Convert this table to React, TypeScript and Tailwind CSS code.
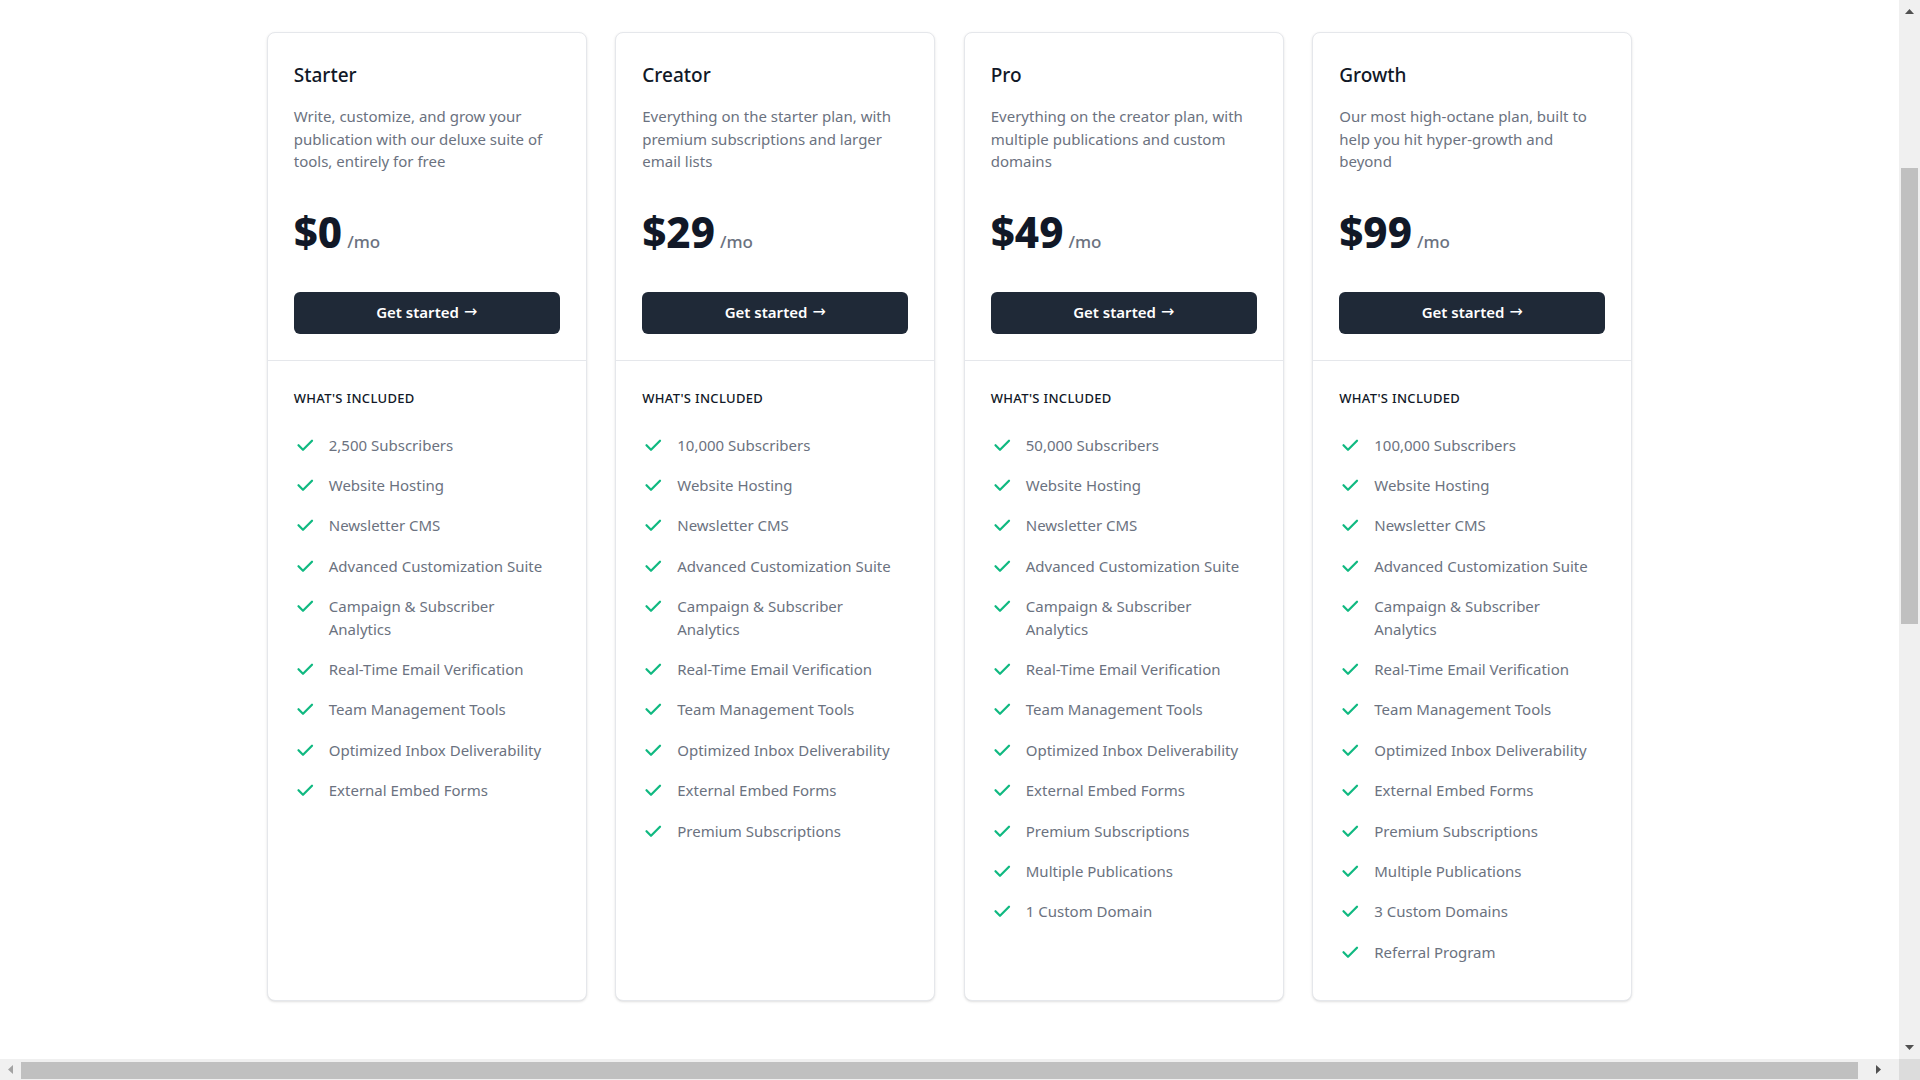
import React from "react";

type Plan = {
  name: string;
  desc: string;
  price: string;
  features: string[];
};

const base = [
  "Website Hosting",
  "Newsletter CMS",
  "Advanced Customization Suite",
  "Campaign & Subscriber Analytics",
  "Real-Time Email Verification",
  "Team Management Tools",
  "Optimized Inbox Deliverability",
  "External Embed Forms",
];

const plans: Plan[] = [
  {
    name: "Starter",
    desc: "Write, customize, and grow your publication with our deluxe suite of tools, entirely for free",
    price: "$0",
    features: ["2,500 Subscribers", ...base],
  },
  {
    name: "Creator",
    desc: "Everything on the starter plan, with premium subscriptions and larger email lists",
    price: "$29",
    features: ["10,000 Subscribers", ...base, "Premium Subscriptions"],
  },
  {
    name: "Pro",
    desc: "Everything on the creator plan, with multiple publications and custom domains",
    price: "$49",
    features: [
      "50,000 Subscribers",
      ...base,
      "Premium Subscriptions",
      "Multiple Publications",
      "1 Custom Domain",
    ],
  },
  {
    name: "Growth",
    desc: "Our most high-octane plan, built to help you hit hyper-growth and beyond",
    price: "$99",
    features: [
      "100,000 Subscribers",
      ...base,
      "Premium Subscriptions",
      "Multiple Publications",
      "3 Custom Domains",
      "Referral Program",
    ],
  },
];

function Check() {
  return (
    <svg
      viewBox="0 0 20 20"
      fill="currentColor"
      className="w-[22.5px] h-[22.5px] shrink-0 text-[#10b981]"
      aria-hidden="true"
    >
      <path
        fillRule="evenodd"
        d="M16.707 5.293a1 1 0 010 1.414l-8 8a1 1 0 01-1.414 0l-4-4a1 1 0 011.414-1.414L8 12.586l7.293-7.293a1 1 0 011.414 0z"
        clipRule="evenodd"
      />
    </svg>
  );
}

function Card({ plan }: { plan: Plan }) {
  return (
    <div className="w-[320px] shrink-0 rounded-lg border border-[#e5e7eb] bg-white shadow-sm flex flex-col">
      <div className="px-[26px] pt-[28px] pb-[26px] border-b border-[#e5e7eb]">
        <h2 className="text-[19px] leading-[28px] font-medium text-[#111827]">{plan.name}</h2>
        <p className="mt-[16px] text-[15px] leading-[22.5px] text-[#6b7280]">{plan.desc}</p>
        <p className="mt-[39px] flex items-baseline">
          <span className="text-[42px] leading-[40px] font-extrabold text-[#111827]">
            {plan.price}
          </span>
          <span className="ml-[5px] text-[17px] font-medium text-[#6b7280]">/mo</span>
        </p>
        <button className="mt-[38px] w-full h-[42px] pb-[2px] rounded-md bg-[#1f2937] text-white text-[15px] font-semibold flex items-center justify-center">
          Get started
          <span
            className="ml-[5px] font-normal text-[16px]"
            style={{ fontFamily: '"DejaVu Sans", sans-serif' }}
          >
            →
          </span>
        </button>
      </div>
      <div className="px-[26px] pt-[29px] pb-[37px]">
        <h3 className="text-[13px] leading-[16px] font-medium text-[#111827] uppercase tracking-wide">
          What's included
        </h3>
        <ul className="mt-[27.5px] flex flex-col gap-[17.9px]">
          {plan.features.map((f) => (
            <li key={f} className="flex items-start gap-[12.5px]">
              <Check />
              <span className="text-[15px] leading-[22.5px] text-[#6b7280]">{f}</span>
            </li>
          ))}
        </ul>
      </div>
    </div>
  );
}

function VScrollbar() {
  return (
    <div className="w-[21px] shrink-0 bg-[#f0f0f0] flex flex-col">
      <div className="h-[21px] flex items-center justify-center">
        <svg width="9" height="5" viewBox="0 0 9 5" className="mt-[2px]">
          <polygon points="4.5,0 9,5 0,5" fill="#505050" />
        </svg>
      </div>
      <div className="flex-1 flex flex-col px-[2px]">
        <div className="h-[147px]" />
        <div className="h-[456px] bg-[#c0c0c0]" />
      </div>
      <div className="h-[21px] flex items-center justify-center">
        <svg width="9" height="5" viewBox="0 0 9 5" className="mb-[2px]">
          <polygon points="0,0 9,0 4.5,5" fill="#505050" />
        </svg>
      </div>
    </div>
  );
}

function HScrollbar() {
  return (
    <div className="h-[21px] shrink-0 flex">
      <div className="flex-1 bg-[#f0f0f0] flex items-center">
        <div className="w-[21px] h-full flex items-center justify-center">
          <svg width="5" height="9" viewBox="0 0 5 9">
            <polygon points="5,0 5,9 0,4.5" fill="#a3a3a3" />
          </svg>
        </div>
        <div className="flex-1 h-[17px] mt-[1px] bg-[#c0c0c0]" />
        <div className="w-[41px] h-full flex items-center justify-center">
          <svg width="5" height="9" viewBox="0 0 5 9">
            <polygon points="0,0 5,4.5 0,9" fill="#505050" />
          </svg>
        </div>
      </div>
      <div className="w-[21px] h-full bg-[#dcdcdc]" />
    </div>
  );
}

export default function App() {
  return (
    <div
      className="w-screen h-screen overflow-hidden flex flex-col bg-white"
      style={{ fontFamily: '"Noto Sans", "Open Sans", sans-serif' }}
    >
      <div className="flex-1 flex min-h-0">
        <div className="flex-1 min-w-0 overflow-hidden">
          <div className="pt-[32px] flex justify-center items-stretch gap-[28.5px]">
            {plans.map((p) => (
              <Card key={p.name} plan={p} />
            ))}
          </div>
        </div>
        <VScrollbar />
      </div>
      <HScrollbar />
    </div>
  );
}
